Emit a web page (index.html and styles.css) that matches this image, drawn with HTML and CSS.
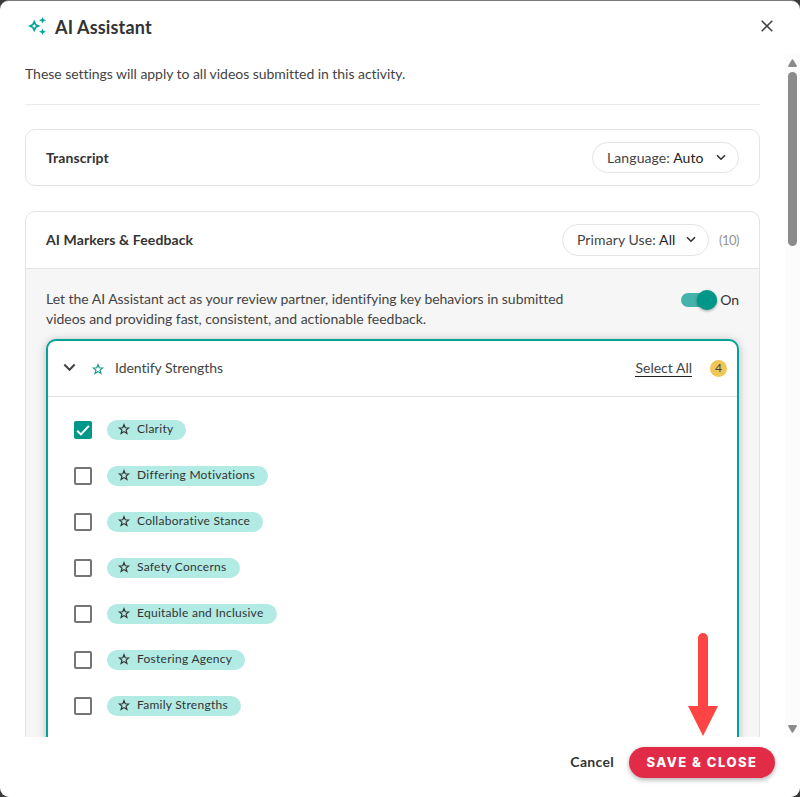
FILE: index.html
```html
<!DOCTYPE html>
<html lang="en">
<head>
  <meta charset="UTF-8" />
  <meta name="viewport" content="width=device-width, initial-scale=1.0"/>
  <title>AI Assistant</title>
  <link rel="stylesheet" href="styles.css">
</head>
<body>

<!-- Shared icons -->
<svg class="icon-defs" width="0" height="0">
  <symbol id="star" viewBox="0 0 24 24">
    <path d="M12 4.500l2.100 5.300 5.900.4-4.500 3.800 1.500 5.700-5-3.200-5 3.200 1.500-5.700L4 10.200l5.900-.4z" fill="none" stroke="currentColor" stroke-width="2"/>
  </symbol>
  <symbol id="chevron" viewBox="0 0 12 8">
    <path d="M1.2 1.3L6 6.1l4.800-4.800" fill="none" stroke="currentColor" stroke-width="1.900"/>
  </symbol>
</svg>

<div class="dialog">
  <header class="dialog-header">
    <svg class="sparkle" viewBox="0 0 18 18">
      <path fill-rule="evenodd" d="M6.200 2.700L8.200 7 12.500 9 8.200 11 6.200 15.300 4.200 11 0 9 4.200 7zM6.200 6.700L5.400 8.200 3.900 9 5.400 9.800 6.200 11.300 7 9.800 8.500 9 7 8.200z"/>
      <path d="M14.500 0l1 2.300 2.500 1-2.500 1-1 2.300-1-2.300-2.500-1 2.500-1z"/>
      <path d="M14.500 11.400l1 2.300 2.500 1-2.500 1-1 2.300-1-2.300-2.500-1 2.500-1z"/>
    </svg>
    <h1>AI Assistant</h1>
    <button class="close" aria-label="Close">
      <svg width="12" height="12" viewBox="0 0 12 12"><path d="M.7.7l10.600 10.600M11.300.7L.7 11.300" stroke="currentColor" stroke-width="1.600"/></svg>
    </button>
  </header>

  <div class="dialog-body">
    <div class="content">
      <p class="intro">These settings will apply to all videos submitted in this activity.</p>

      <!-- Transcript -->
      <section class="card">
        <div class="card-header">
          <h2>Transcript</h2>
          <button class="dropdown"><span>Language: <b>Auto</b></span><svg><use href="#chevron"/></svg></button>
        </div>
      </section>

      <!-- Markers -->
      <section class="card">
        <div class="card-header">
          <h2>AI Markers &amp; Feedback</h2>
          <button class="dropdown dropdown-use"><span>Primary Use: <b>All</b></span><svg><use href="#chevron"/></svg></button>
          <span class="count">(10)</span>
        </div>
        <div class="card-body">
          <div class="description">
            <p>Let the AI Assistant act as your review partner, identifying key behaviors in submitted<br>videos and providing fast, consistent, and actionable feedback.</p>
            <div class="toggle"><span class="track"><span class="knob"></span></span><span>On</span></div>
          </div>

          <div class="panel">
            <div class="panel-header">
              <svg class="expand"><use href="#chevron"/></svg>
              <svg class="star"><use href="#star"/></svg>
              <span class="panel-title">Identify Strengths</span>
              <a class="select-all">Select All</a>
              <span class="badge">4</span>
            </div>
            <ul class="markers">
              <li><span class="checkbox checked"><svg viewBox="0 0 18 18"><path d="M3.200 9.700l3.700 3.700 8-8.500"/></svg></span><span class="chip"><svg><use href="#star"/></svg>Clarity</span></li>
              <li><span class="checkbox"></span><span class="chip"><svg><use href="#star"/></svg>Differing Motivations</span></li>
              <li><span class="checkbox"></span><span class="chip"><svg><use href="#star"/></svg>Collaborative Stance</span></li>
              <li><span class="checkbox"></span><span class="chip"><svg><use href="#star"/></svg>Safety Concerns</span></li>
              <li><span class="checkbox"></span><span class="chip"><svg><use href="#star"/></svg>Equitable and Inclusive</span></li>
              <li><span class="checkbox"></span><span class="chip"><svg><use href="#star"/></svg>Fostering Agency</span></li>
              <li><span class="checkbox"></span><span class="chip"><svg><use href="#star"/></svg>Family Strengths</span></li>
            </ul>
          </div>
        </div>
      </section>
    </div>

    <div class="scrollbar">
      <svg width="9" height="8" viewBox="0 0 9 8"><path d="M4.500 1.300L8 7H1z"/></svg>
      <span class="thumb"></span>
      <svg width="9" height="8" viewBox="0 0 9 8"><path d="M1 1h7L4.500 6.700z"/></svg>
    </div>
  </div>

  <footer class="dialog-footer">
    <button class="cancel">Cancel</button>
    <button class="save">SAVE &amp; CLOSE</button>
  </footer>

  <svg class="arrow" viewBox="0 0 30 103">
    <path d="M10 73V5a5 5 0 0 1 10 0v68h10L15 103 0 73z"/>
  </svg>
</div>

</body>
</html>
```
FILE: styles.css
```css
* {
  box-sizing: border-box;
}

body {
  margin: 0;
  background: #3a3a3c;
  font-family: Lato, "Open Sans", sans-serif;
  font-size: 14px;
  font-variant-ligatures: none;
  color: #444;
}

h1, h2, p, ul {
  margin: 0;
  padding: 0;
}

button {
  font: inherit;
  color: inherit;
  background: none;
  border: none;
  padding: 0;
}

svg {
  flex: none;
}

.icon-defs {
  display: none;
}

.dialog {
  position: relative;
  display: flex;
  flex-direction: column;
  height: 797px;
  background: #fff;
  border-top: 1px solid #7a7a7a;
  border-radius: 9px;
  overflow: hidden;
}

.dialog-header {
  display: flex;
  align-items: center;
  height: 53px;
  padding: 0 27px 3px 28px;
}

.sparkle {
  width: 18px;
  height: 18px;
  fill: #00a59b;
}

h1 {
  flex: 1;
  margin-left: 9px;
  padding-top: 2px;
  font-size: 18px;
  line-height: 22px;
  letter-spacing: 0.15px;
  color: #333;
}

.close {
  display: flex;
  color: #444;
}

.dialog-body {
  display: flex;
  height: 683px;
  overflow: hidden;
}

.content {
  flex: 1;
  padding: 0 25px;
}

.intro {
  height: 51px;
  padding-top: 10px;
  line-height: 20px;
  letter-spacing: -0.04px;
  border-bottom: 1px solid #ebebeb;
}

.card {
  margin-top: 24px;
  border: 1px solid #e4e4e4;
  border-radius: 10px;
  overflow: hidden;
}

.card + .card {
  margin-top: 25px;
}

.card-header {
  display: flex;
  align-items: center;
  height: 55px;
  padding: 0 20px;
}

.card + .card .card-header {
  height: 56px;
}

h2 {
  flex: 1;
  font-size: 14px;
  line-height: 20px;
  letter-spacing: 0.1px;
  color: #333;
}

.dropdown {
  display: flex;
  align-items: center;
  justify-content: space-between;
  width: 147px;
  height: 31px;
  padding: 0 12px 1px 14px;
  border: 1px solid #e4e4e4;
  border-radius: 16px;
  letter-spacing: 0.1px;
  white-space: nowrap;
}

.dropdown-use {
  height: 32px;
  padding-bottom: 2px;
}

.dropdown b {
  font-weight: normal;
  color: #222;
}

.dropdown svg {
  width: 10px;
  height: 7px;
  margin-top: 1px;
  color: #333;
}

.count {
  width: 20px;
  margin-left: 10px;
  padding-bottom: 1px;
  font-size: 13px;
  letter-spacing: -0.5px;
  white-space: nowrap;
  color: #949494;
}

.card-body {
  padding: 20px;
  background: #f6f6f6;
  border-top: 1px solid #e4e4e4;
}

.description {
  display: flex;
  justify-content: space-between;
  height: 50px;
  line-height: 20px;
  letter-spacing: -0.03px;
  white-space: nowrap;
}

.toggle {
  display: flex;
  align-items: center;
  gap: 3px;
  height: 22px;
  color: #333;
}

.track {
  display: flex;
  align-items: center;
  justify-content: flex-end;
  width: 36px;
  height: 14px;
  border-radius: 7px;
  background: #43b3ac;
}

.knob {
  flex: none;
  width: 20px;
  height: 20px;
  border-radius: 50%;
  background: #009688;
  box-shadow: 0 1px 3px rgba(0,0,0,0.4);
}

.panel {
  height: 460px;
  background: #fff;
  border: 2px solid #00a396;
  border-radius: 10px;
  box-shadow: 0 1px 8px rgba(0,0,0,0.25);
}

.panel-header {
  display: flex;
  align-items: center;
  height: 56px;
  padding: 0 10px 0 15px;
  border-bottom: 1px solid #e0e0e0;
}

.expand {
  width: 13px;
  height: 9px;
  margin-bottom: 3px;
}

.star {
  width: 14px;
  height: 14px;
  margin-left: 15px;
  color: #159a8c;
}

.panel-title {
  flex: 1;
  margin-left: 10px;
  padding-bottom: 2px;
  letter-spacing: -0.05px;
}

.select-all {
  line-height: 16px;
  border-bottom: 1px solid #222;
}

.badge {
  width: 17px;
  height: 17px;
  margin-left: 18px;
  border-radius: 50%;
  background: #efc555;
  font-size: 12px;
  line-height: 16px;
  text-align: center;
}

.markers {
  list-style: none;
  padding: 10px 0 0 26px;
}

.markers li {
  display: flex;
  align-items: center;
  height: 46px;
}

.checkbox {
  width: 18px;
  height: 18px;
  border: 2px solid #757575;
  border-radius: 2px;
}

.checked {
  border: none;
  background: #009688;
}

.checkbox svg {
  display: block;
  fill: none;
  stroke: #fff;
  stroke-width: 2;
}

.chip {
  display: flex;
  align-items: center;
  height: 20px;
  margin-left: 15px;
  padding: 0 13px 3px 10px;
  border-radius: 10px;
  background: #b1ebe4;
  font-size: 12px;
  letter-spacing: 0.27px;
  color: #333;
}

.chip svg {
  width: 14px;
  height: 14px;
  margin-right: 6px;
}

.scrollbar {
  display: flex;
  flex-direction: column;
  align-items: center;
  justify-content: space-between;
  width: 15px;
  padding: 5px 0 4px;
  background: #fcfcfc;
}

.scrollbar path {
  fill: #8b8b8b;
  stroke: #8b8b8b;
  stroke-width: 1.800;
  stroke-linejoin: round;
}

.thumb {
  width: 9px;
  height: 174px;
  margin: 5px 0 auto;
  border-radius: 5px;
  background: #8b8b8b;
}

.dialog-footer {
  display: flex;
  align-items: center;
  justify-content: flex-end;
  height: 60px;
  padding: 0 25px 10px 0;
}

.cancel {
  margin-right: 15px;
  padding-bottom: 1px;
  font-weight: bold;
  letter-spacing: 0.3px;
  color: #333;
}

.save {
  width: 146px;
  height: 31px;
  border-radius: 16px;
  background: #e22b46;
  box-shadow: 0 2px 5px rgba(0,0,0,0.3);
  color: #fff;
  font-family: Inter, sans-serif;
  font-weight: 800;
  font-size: 13px;
  letter-spacing: 1.5px;
}

/* pointer on top of the dialog */
.arrow {
  position: absolute;
  left: 688px;
  top: 632px;
  width: 30px;
  height: 103px;
  fill: #ff4444;
}
```
